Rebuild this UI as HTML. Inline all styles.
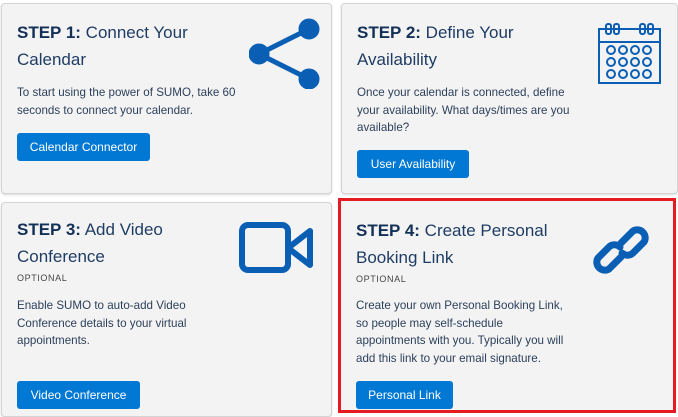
<!DOCTYPE html>
<html><head><style>
html,body{margin:0;padding:0;width:678px;height:413px;overflow:hidden;background:#fff;font-family:"Liberation Sans",sans-serif;}
.card{position:absolute;background:#f3f3f3;border:1px solid #d4d4d4;border-radius:4px;box-shadow:0 1px 2px rgba(0,0,0,.15);box-sizing:border-box;}
.t{position:absolute;left:15px;font-size:17px;line-height:27px;color:#1f3d64;width:205px;}
.t b{color:#133057}
.o{position:absolute;left:15px;font-size:9px;letter-spacing:.6px;color:#444;}
.p{position:absolute;left:15px;font-size:11.6px;line-height:17.7px;color:#2b3f5a;width:300px;}
.btn{position:absolute;left:15px;height:28px;background:#0078d4;color:#fff;border-radius:3px;font-size:12px;line-height:28px;text-align:center;}
svg{position:absolute}
</style></head><body>
<div class="card" style="left:1px;top:3px;width:331px;height:191px">
 <div class="t" style="top:15px"><b>STEP 1:</b> Connect Your Calendar</div>
 <div class="p" style="top:80px">To start using the power of SUMO, take 60<br>seconds to connect your calendar.</div>
 <div class="btn" style="top:129px;width:133px">Calendar Connector</div>
 <svg style="left:247px;top:13px" width="72" height="72" viewBox="0 0 72 72"><g stroke="#0a5fb4" stroke-width="5" fill="#0a5fb4"><line x1="10" y1="37" x2="60" y2="12"/><line x1="10" y1="37" x2="60" y2="62"/><circle cx="60" cy="12" r="8"/><circle cx="10" cy="37" r="8"/><circle cx="60" cy="62" r="8"/></g></svg>
</div>
<div class="card" style="left:341px;top:3px;width:337px;height:191px">
 <div class="t" style="top:15px"><b>STEP 2:</b> Define Your Availability</div>
 <div class="p" style="top:80px">Once your calendar is connected, define<br>your availability. What days/times are you<br>available?</div>
 <div class="btn" style="top:146px;width:112px">User Availability</div>
 <svg style="left:255px;top:17px" width="66" height="64" viewBox="0 0 66 64" fill="none" stroke="#0a5fb4" stroke-width="2"><rect x="2" y="8" width="61" height="54"/><line x1="2" y1="21" x2="63" y2="21"/><line x1="22" y1="8" x2="42" y2="8"/><rect x="9" y="3" width="5" height="10" rx="2"/><rect x="17" y="3" width="5" height="10" rx="2"/><rect x="43" y="3" width="5" height="10" rx="2"/><rect x="51" y="3" width="5" height="10" rx="2"/><g><circle cx="14" cy="29" r="4"/><circle cx="26" cy="29" r="4"/><circle cx="38" cy="29" r="4"/><circle cx="50" cy="29" r="4"/><circle cx="14" cy="41" r="4"/><circle cx="26" cy="41" r="4"/><circle cx="38" cy="41" r="4"/><circle cx="50" cy="41" r="4"/><circle cx="14" cy="53" r="4"/><circle cx="26" cy="53" r="4"/><circle cx="38" cy="53" r="4"/><circle cx="50" cy="53" r="4"/></g></svg>
</div>
<div class="card" style="left:1px;top:202px;width:331px;height:215px">
 <div class="t" style="top:13px"><b>STEP 3:</b> Add Video Conference</div>
 <div class="o" style="top:70px">OPTIONAL</div>
 <div class="p" style="top:94px">Enable SUMO to auto-add Video<br>Conference details to your virtual<br>appointments.</div>
 <div class="btn" style="top:178px;width:123px">Video Conference</div>
 <svg style="left:236px;top:18px" width="76" height="54" viewBox="0 0 76 54" fill="none" stroke="#0a5fb4" stroke-width="6"><rect x="4" y="4" width="46" height="45" rx="6"/><path d="M50 27 L72 10 V44 Z" stroke-linejoin="round"/></svg>
</div>
<div class="card" style="left:338px;top:198px;width:338px;height:215px;border:3px solid #e41b23;border-radius:0;box-shadow:none">
 <div class="t" style="top:16px;left:15px"><b>STEP 4:</b> Create Personal Booking Link</div>
 <div class="o" style="top:73px;left:15px">OPTIONAL</div>
 <div class="p" style="top:96px;left:15px">Create your own Personal Booking Link,<br>so people may self-schedule<br>appointments with you. Typically you will<br>add this link to your email signature.</div>
 <div class="btn" style="top:180px;width:97px;left:15px">Personal Link</div>
 <svg style="left:250px;top:20px" width="60" height="58" viewBox="0 0 60 58" fill="none" stroke="#0a5fb4" stroke-width="7" stroke-linecap="round"><path d="M30 22 L42 10 a8 8 0 0 1 11 11 L42 32 a8 8 0 0 1 -11 0"/><path d="M30 36 L18 48 a8 8 0 0 1 -11 -11 L18 26 a8 8 0 0 1 11 0"/></svg>
</div>
</body></html>
